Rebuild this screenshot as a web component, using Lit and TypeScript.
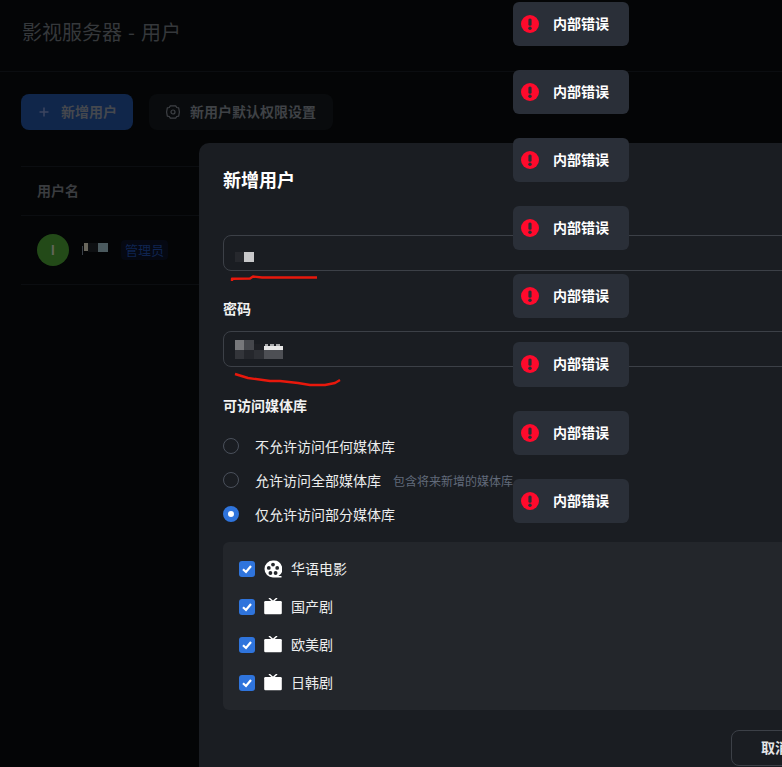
import { LitElement, html, css, svg } from "lit";
import { customElement } from "lit/decorators.js";

type Px = [number, number, number, number, string];

const redactions: Px[] = [
  [84, 243, 4, 8, "#6a675c"],
  [82, 246, 1, 9, "#3a4048"],
  [88, 243, 10, 9, "#0e1012"],
  [98, 243, 10, 9, "#4b5a5e"],
];
const inputBlocks: Px[] = [
  [235, 252, 9, 10, "#26282d"],
  [244, 252, 10, 10, "#c8c8ca"],
  [235, 367, 114, 2, "#1a1d22"],
  [235, 340, 9, 10, "#77787b"],
  [244, 340, 10, 10, "#45474c"],
  [235, 350, 9, 9, "#33353a"],
  [244, 350, 10, 9, "#25272c"],
  [254, 350, 10, 9, "#2e3035"],
  [264, 350, 19, 9, "#4d4f54"],
  [264, 346, 19, 4, "#e6e6e6"],
  [254, 344, 10, 6, "#1e2025"],
  [265, 344, 3, 2, "#a8a9ab"],
  [270, 344, 4, 2, "#a8a9ab"],
  [276, 344, 4, 2, "#a8a9ab"],
];

const alertIcon = svg`<circle cx="9" cy="9" r="9" fill="#ff0a2c"/><rect x="7.4" y="3.5" width="3.2" height="7.2" rx="1.5" fill="#2a2f38"/><circle cx="9" cy="13.2" r="1.7" fill="#2a2f38"/>`;

const libs = [
  { name: "华语电影", film: true },
  { name: "国产剧", film: false },
  { name: "欧美剧", film: false },
  { name: "日韩剧", film: false },
];

@customElement("app-root")
export class AppRoot extends LitElement {
  static styles = css`
    :host {
      display: block;
      position: relative;
      width: 782px;
      height: 767px;
      overflow: hidden;
      background: #040506;
      font-family: "Noto Sans CJK SC", "Liberation Sans", sans-serif;
      font-size: 14px;
      color: #fff;
    }
    .t {
      margin-bottom: 2px;
    }
    .header {
      height: 72px;
      box-sizing: border-box;
      border-bottom: 1px solid #0b0d10;
      padding: 0 22px 8px;
      display: flex;
      align-items: center;
      font-size: 20px;
      word-spacing: 1.5px;
      color: #35383b;
    }
    .toolbar {
      display: flex;
      gap: 16px;
      padding: 22px 21px 0;
    }
    .btn {
      height: 36px;
      box-sizing: border-box;
      border-radius: 8px;
      display: flex;
      align-items: center;
      font-weight: 700;
      color: #3f4246;
    }
    .btn.primary {
      width: 112px;
      padding-left: 16px;
      gap: 10px;
      background: #10264a;
      color: #45484e;
    }
    .btn.secondary {
      width: 184px;
      padding-left: 17px;
      gap: 10px;
      background: #090b0d;
    }
    .table {
      margin: 36px 0 0 21px;
      border-top: 1px solid #0b0d10;
    }
    .th {
      height: 48px;
      border-bottom: 1px solid #0b0d10;
      padding-left: 16px;
      display: flex;
      align-items: center;
      font-weight: 700;
      color: #3a3c3f;
    }
    .tr {
      height: 68px;
      border-bottom: 1px solid #0b0d10;
      padding-left: 16px;
      display: flex;
      align-items: center;
    }
    .avatar {
      width: 32px;
      height: 32px;
      border-radius: 50%;
      background: #234a18;
      color: #62665a;
      font-weight: 700;
      display: flex;
      align-items: center;
      justify-content: center;
      font-size: 13px;
    }
    .badge {
      margin-left: 52px;
      width: 47px;
      height: 20px;
      border-radius: 4px;
      background: #050812;
      color: #0f2450;
      font-size: 13px;
      display: flex;
      align-items: center;
      justify-content: center;
    }
    .modal {
      position: absolute;
      left: 199px;
      top: 143px;
      width: 744px;
      box-sizing: border-box;
      padding: 24px 24px 24px;
      background: #1a1d22;
      border-radius: 10px 10px 0 0;
    }
    .modal h2 {
      margin: 0 0 42px;
      font-size: 18px;
      line-height: 24px;
      height: 26px;
      font-weight: 700;
      color: #fff;
    }
    .input {
      height: 36px;
      box-sizing: border-box;
      border: 1px solid #3c4047;
      border-radius: 8px;
    }
    .label {
      height: 20px;
      line-height: 18px;
      font-weight: 700;
      color: #f1f1f1;
      margin: 28px 0 12px;
    }
    .label.lib {
      margin: 29px 0 13px;
    }
    .radio {
      height: 34px;
      display: flex;
      align-items: center;
      color: #eceded;
    }
    .dot {
      width: 16px;
      height: 16px;
      box-sizing: border-box;
      border: 1px solid #4a505b;
      border-radius: 50%;
      margin-right: 16px;
      flex: none;
    }
    .dot.on {
      border: 5px solid #2f74dc;
      background: #fff;
    }
    .hint {
      font-size: 12px;
      color: #616a7a;
      margin-left: 12px;
    }
    .panel {
      margin-top: 11px;
      padding: 8px 16px;
      background: #23262b;
      border-radius: 6px;
    }
    .lib-row {
      height: 38px;
      display: flex;
      align-items: center;
      color: #eceded;
    }
    .check {
      width: 16px;
      height: 16px;
      border-radius: 3px;
      background: #2f74dc;
      display: block;
      flex: none;
      margin-right: 9px;
    }
    .lib-icon {
      width: 18px;
      height: 18px;
      margin-right: 9px;
      flex: none;
      display: block;
    }
    .footer {
      display: flex;
      justify-content: flex-end;
      gap: 8px;
      margin-top: 20px;
    }
    .footer .b {
      width: 90px;
      height: 36px;
      box-sizing: border-box;
      border: 1px solid #3c4047;
      border-radius: 8px;
      display: flex;
      align-items: center;
      justify-content: flex-start;
      padding-left: 29px;
      font-weight: 700;
      color: #e4e5e6;
    }
    .footer .b.ok {
      background: #2f74dc;
      border-color: #2f74dc;
      color: #fff;
    }
    .toasts {
      position: absolute;
      left: 513px;
      top: 1.5px;
      display: flex;
      flex-direction: column;
      gap: 24px;
    }
    .toast {
      width: 116px;
      height: 44.18px;
      box-sizing: border-box;
      padding-left: 8px;
      background: #2a2f38;
      border-radius: 6px;
      display: flex;
      align-items: center;
      gap: 14px;
      font-weight: 700;
      color: #fff;
    }
    .toast svg {
      width: 18px;
      height: 18px;
      display: block;
      flex: none;
    }
    .px {
      position: absolute;
    }
    .scribble {
      position: absolute;
      left: 0;
      top: 0;
      pointer-events: none;
    }
  `;

  private blocks(list: Px[]) {
    return list.map(
      ([x, y, w, h, c]) =>
        html`<div class="px" style="left:${x}px;top:${y}px;width:${w}px;height:${h}px;background:${c}"></div>`
    );
  }

  private libIcon(film: boolean) {
    if (film) {
      return html`<svg class="lib-icon" viewBox="0 0 18 18">
        <path d="M9 .5a8.500 8.500 0 1 0 0 17h8.500v-1.400h-3.100A8.500 8.500 0 0 0 9 .5z" fill="#fff" />
        <circle cx="9" cy="4.600" r="1.900" fill="#23262b" />
        <circle cx="4.800" cy="7.900" r="1.900" fill="#23262b" />
        <circle cx="13.200" cy="7.900" r="1.900" fill="#23262b" />
        <circle cx="6.400" cy="13" r="1.900" fill="#23262b" />
        <circle cx="11.600" cy="13" r="1.900" fill="#23262b" />
      </svg>`;
    }
    return html`<svg class="lib-icon" viewBox="0 0 18 18">
      <path d="M5 0 9 3.600 13 0" fill="none" stroke="#fff" stroke-width="1.500" />
      <rect x="0.200" y="3" width="17.600" height="13.300" rx="1.200" fill="#fff" />
    </svg>`;
  }

  render() {
    return html`
      <div class="header">影视服务器 - 用户</div>
      <div class="toolbar">
        <div class="btn primary">
          <svg width="14" height="14" viewBox="0 0 14 14">
            <path d="M7 2.500v9M2.500 7h9" stroke="#3c4660" stroke-width="1.500" fill="none" />
          </svg>
          <span class="t">新增用户</span>
        </div>
        <div class="btn secondary">
          <svg width="14" height="14" viewBox="0 0 14 14" fill="none" stroke="#3f4246" stroke-width="1.200">
            <path d="M4.300.9h5.400l1 1.600 2 .3L13.400 7l-.7 4.200-2 .3-1 1.600H4.300l-1-1.600-2-.3L.6 7l.7-4.200 2-.3z" stroke-linejoin="round" />
            <circle cx="7" cy="7" r="2" />
          </svg>
          <span class="t">新用户默认权限设置</span>
        </div>
      </div>
      <div class="table">
        <div class="th"><span class="t">用户名</span></div>
        <div class="tr">
          <div class="avatar"><span class="t">I</span></div>
          <div class="badge"><span class="t">管理员</span></div>
        </div>
      </div>
      ${this.blocks(redactions)}

      <div class="modal">
        <h2>新增用户</h2>
        <div class="input"></div>
        <div class="label">密码</div>
        <div class="input"></div>
        <div class="label lib">可访问媒体库</div>
        <div class="radio"><span class="dot"></span><span>不允许访问任何媒体库</span></div>
        <div class="radio">
          <span class="dot"></span><span>允许访问全部媒体库</span><span class="hint">包含将来新增的媒体库</span>
        </div>
        <div class="radio"><span class="dot on"></span><span>仅允许访问部分媒体库</span></div>
        <div class="panel">
          ${libs.map(
            (l) => html`<div class="lib-row">
              <svg class="check" viewBox="0 0 16 16">
                <path d="M4 8.200 7 11l5-6" fill="none" stroke="#fff" stroke-width="2.200" />
              </svg>
              ${this.libIcon(l.film)}<span class="t">${l.name}</span>
            </div>`
          )}
        </div>
        <div class="footer">
          <div class="b"><span class="t">取消</span></div>
          <div class="b ok"><span class="t">确定</span></div>
        </div>
      </div>

      ${this.blocks(inputBlocks)}
      <svg class="scribble" width="782" height="767" fill="none" stroke="#e8180c" stroke-width="2.400" stroke-linejoin="round">
        <path d="M232 281v-2.200L250 278.500 253 276.500 262 277.500 317 277.500" />
        <path d="M235 374 248 378 270 381 280 381 298 383 310 385 325 385 335 383 340 380" />
      </svg>

      <div class="toasts">
        ${Array.from({ length: 8 }).map(
          () => html`<div class="toast"><svg viewBox="0 0 18 18">${alertIcon}</svg><span class="t">内部错误</span></div>`
        )}
      </div>
    `;
  }
}
